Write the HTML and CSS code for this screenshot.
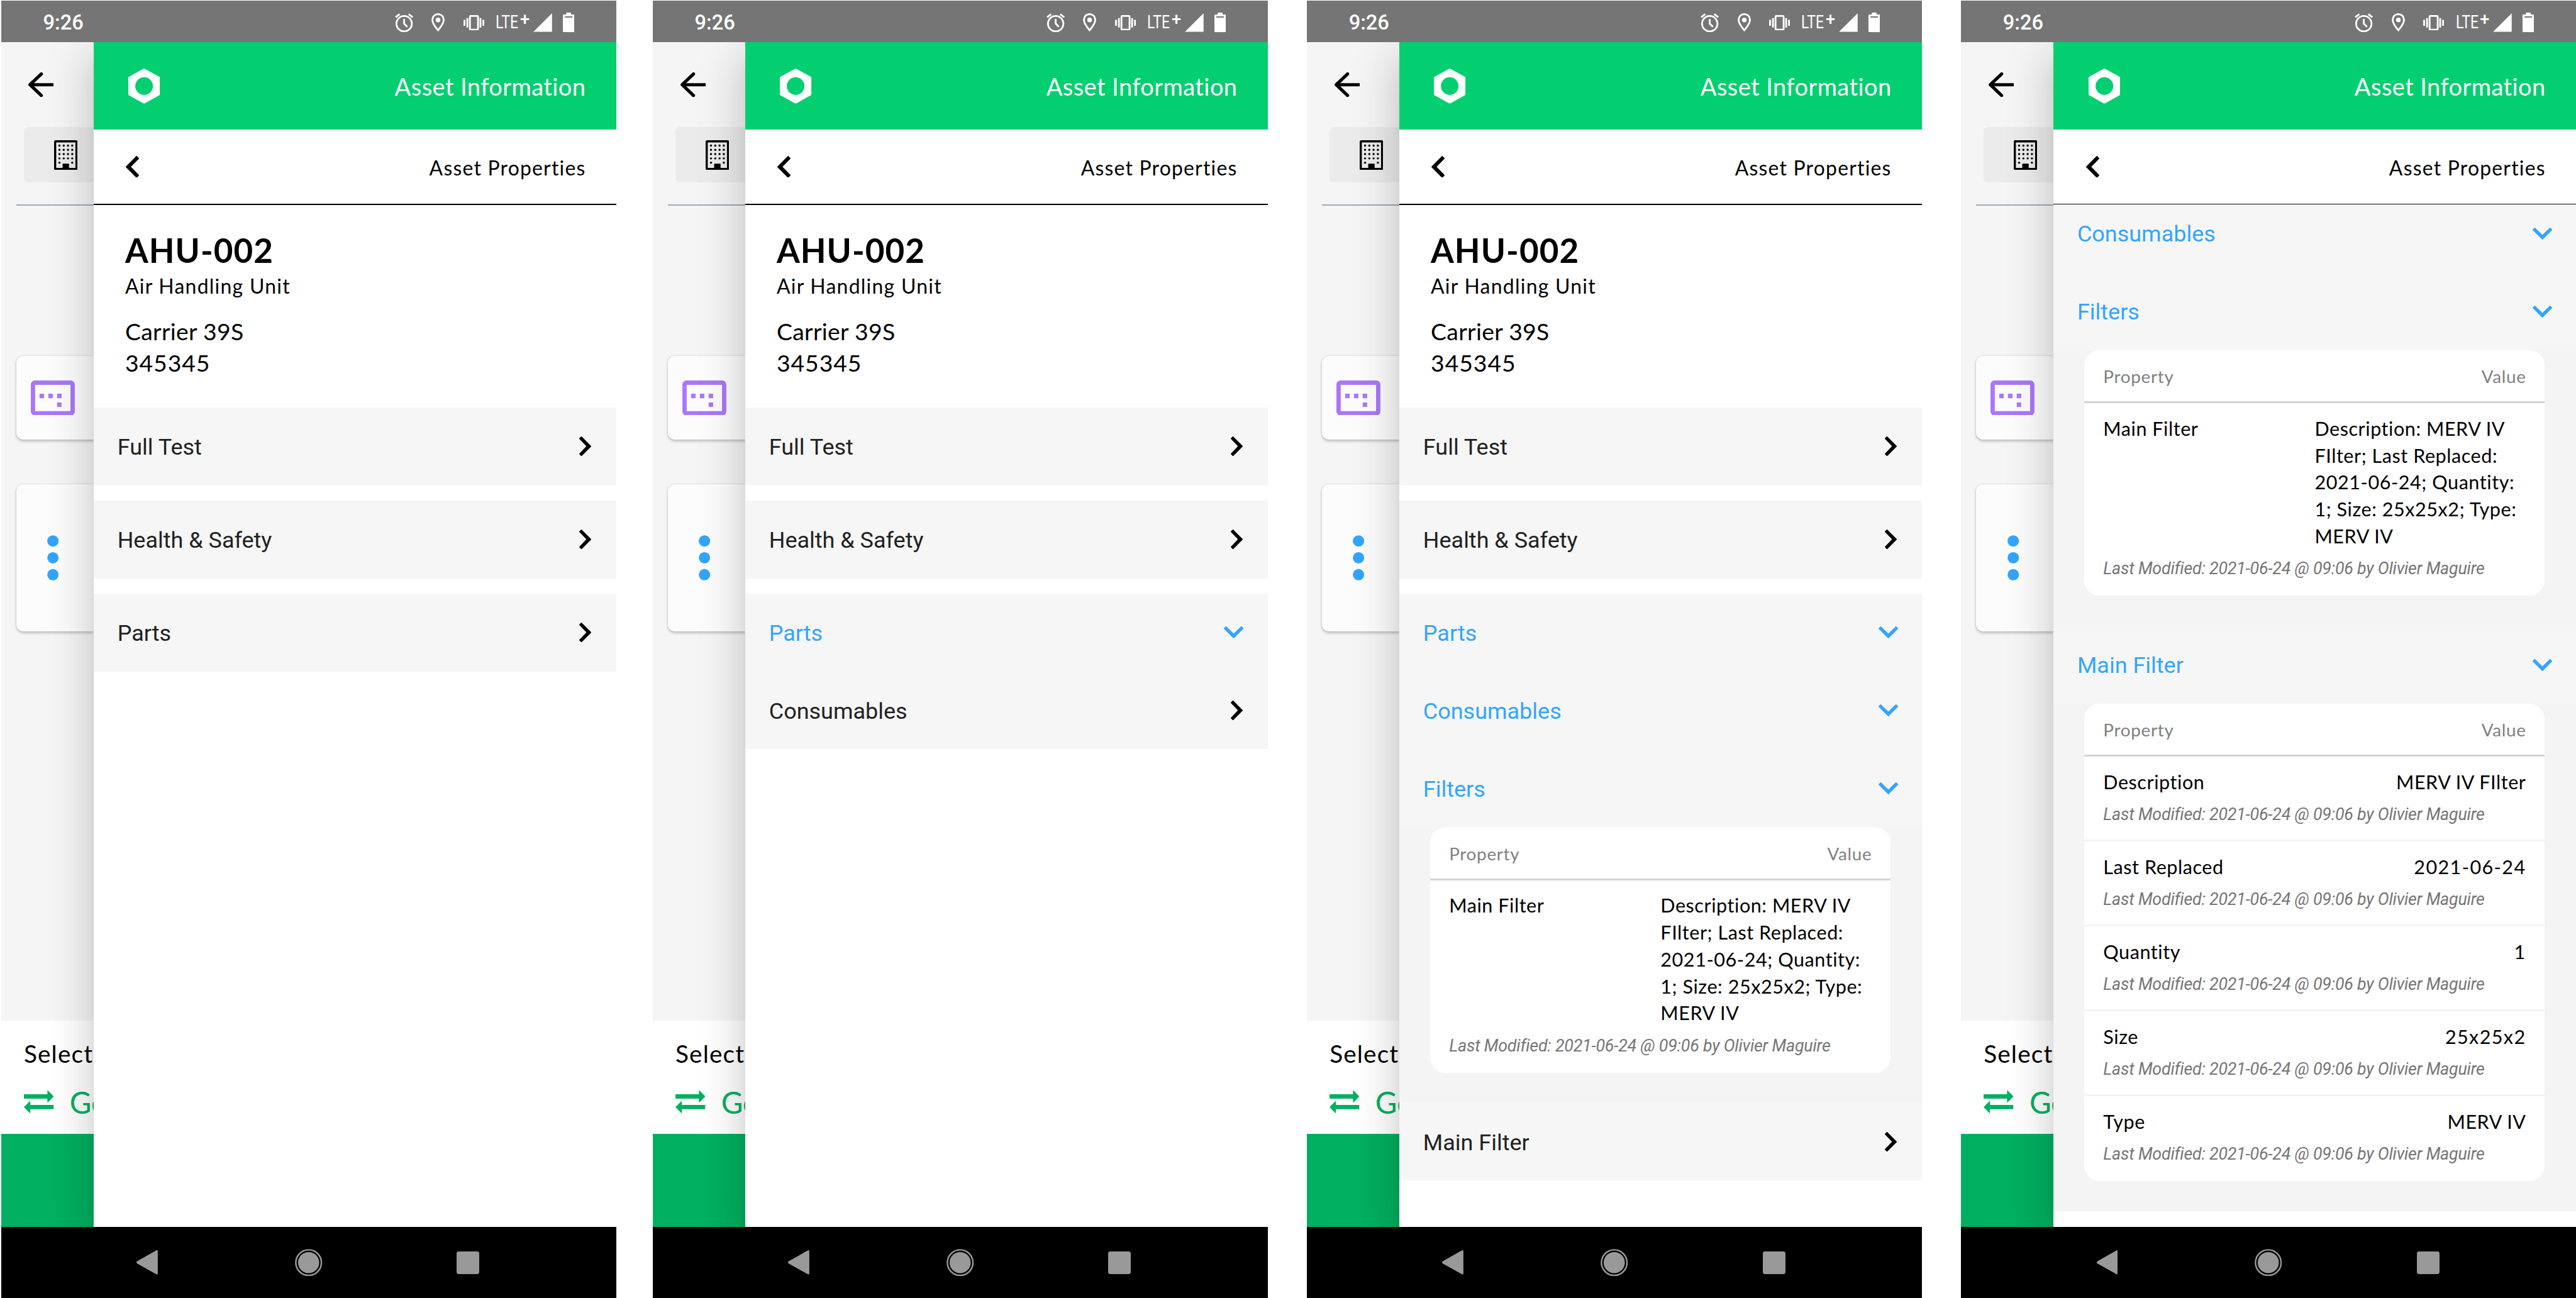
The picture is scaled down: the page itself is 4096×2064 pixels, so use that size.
FILE: index.html
```
<!DOCTYPE html>
<html lang="en">
<head>
  <meta charset="UTF-8">
  <meta name="viewport" content="width=device-width, initial-scale=1.0">
  <title>Asset Information</title>
  <link rel="stylesheet" href="styles.css">
</head>
<body>

<!-- icon sprite -->
<svg class="sprite" xmlns="http://www.w3.org/2000/svg">
  <symbol id="i-alarm" viewBox="0 0 43 45">
    <circle cx="21.5" cy="24.5" r="18" fill="none" stroke="currentColor" stroke-width="4.2"/>
    <path d="M21.5 13.500v11l7.500 7.500M1.500 9.500 11 2M41.500 9.500 32 2" fill="none" stroke="currentColor" stroke-width="4.200"/>
  </symbol>
  <symbol id="i-pin" viewBox="0 0 31 44">
    <path d="M15.500 2.200C8 2.200 2.200 8 2.200 15.500c0 9 13.300 24.500 13.300 24.500s13.300-15.500 13.300-24.500C28.800 8 23 2.200 15.500 2.200z" fill="none" stroke="currentColor" stroke-width="4.200"/>
    <circle cx="15.500" cy="15.800" r="5.500" fill="currentColor"/>
  </symbol>
  <symbol id="i-vibrate" viewBox="0 0 49 36">
    <rect x="15" y="2" width="19" height="32" rx="2" fill="none" stroke="currentColor" stroke-width="4.200"/>
    <path d="M2.200 11v14M9 7v22M39.800 7v22M46.600 11v14" stroke="currentColor" stroke-width="4.200"/>
  </symbol>
  <symbol id="i-signal" viewBox="0 0 44 44">
    <path d="M44 0v44H0z" fill="currentColor"/>
  </symbol>
  <symbol id="i-battery" viewBox="0 0 27 46">
    <path fill-rule="evenodd" d="M8 0h11v4.500h5.500A2.500 2.500 0 0 1 27 7v36.500a2.500 2.500 0 0 1-2.500 2.500h-22A2.500 2.500 0 0 1 0 43.500V7a2.500 2.500 0 0 1 2.500-2.500H8zM4.500 9v2.700h18V9z" fill="currentColor"/>
  </symbol>
  <symbol id="i-back" viewBox="0 0 59 58">
    <path d="M30.500 3.800 4 29l26.500 25.200" fill="none" stroke="currentColor" stroke-width="7.500" stroke-linecap="round" stroke-linejoin="round"/>
    <path d="M8 29h51" stroke="currentColor" stroke-width="7.500"/>
  </symbol>
  <symbol id="i-building" viewBox="0 0 55 70">
    <rect x="2.500" y="2.500" width="50" height="65" rx="1" fill="none" stroke="currentColor" stroke-width="5"/>
    <path d="M12.500 12.500h30.100M12.500 22.500h30.100M12.500 32.500h30.100M12.500 42.500h30.100M12.500 52.500h.1M42.500 52.500h.1" fill="none" stroke="currentColor" stroke-width="5" stroke-linecap="round" stroke-dasharray=".1 9.900"/>
    <path d="M20 70V56.500a1.500 1.500 0 0 1 1.500-1.500h12a1.500 1.500 0 0 1 1.500 1.500V70z" fill="currentColor"/>
  </symbol>
  <symbol id="i-panel" viewBox="0 0 103 82">
    <rect x="5" y="5" width="93" height="72" rx="5" fill="none" stroke="currentColor" stroke-width="10.300"/>
    <path d="M20.500 31h10.500v10.500H20.500zM41 31h10.500v10.500H41zM61.500 31H72v10.500H61.500zM61.500 51.500H72V62H61.500z" fill="currentColor"/>
  </symbol>
  <symbol id="i-dots" viewBox="0 0 27 106">
    <circle cx="13.500" cy="13.500" r="13.300" fill="currentColor"/>
    <circle cx="13.500" cy="53" r="13.300" fill="currentColor"/>
    <circle cx="13.500" cy="92.500" r="13.300" fill="currentColor"/>
  </symbol>
  <symbol id="i-swap" viewBox="0 0 70 53">
    <path d="M1 9h54V1q0-1.500 1.500-.5L70 14 56.500 27.500Q55 28.500 55 27v-8H1q-1 0-1-1v-8q0-1 1-1zM69 44H15v8q0 1.500-1.500.5L0 39l13.500-13.500Q15 24.500 15 26v8h54q1 0 1 1v8q0 1-1 1z" fill="currentColor"/>
  </symbol>
  <symbol id="i-hex" viewBox="0 0 74 82">
    <path fill-rule="evenodd" d="M35 .7q2-1.200 4 0l33.500 18.600Q74 20.200 74 22v38q0 1.800-1.500 2.700L39 81.300q-2 1.200-4 0L1.500 62.700Q0 61.800 0 60V22q0-1.800 1.500-2.700zM37 20.300a20.700 20.700 0 1 0 0 41.400 20.700 20.700 0 0 0 0-41.400z" fill="currentColor"/>
  </symbol>
  <symbol id="i-left" viewBox="0 0 31 51">
    <path d="M25.800 0 31 5.200v1L12.200 25.500 31 44.800v1L25.800 51h-1L0 26v-1L24.800 0z" fill="currentColor"/>
  </symbol>
  <symbol id="i-right" viewBox="0 0 28 46">
    <path d="M4.600 0 0 4.600v1L16.800 23 0 40.400v1L4.600 46h1L28 23.500v-1L5.600 0z" fill="currentColor"/>
  </symbol>
  <symbol id="i-down" viewBox="0 0 46 28">
    <path d="M0 4.600 4.600 0h1L23 16.800 40.400 0h1L46 4.600v1L23.500 28h-1L0 5.600z" fill="currentColor"/>
  </symbol>
  <symbol id="i-nav-back" viewBox="0 0 50 57">
    <path d="M1 26 46.500.5Q50-1 50 2.500v52q0 3.500-3.500 2L1 31q-2-2.500 0-5z" fill="currentColor"/>
  </symbol>
  <symbol id="i-nav-home" viewBox="0 0 64 64">
    <circle cx="32" cy="32" r="30" fill="none" stroke="currentColor" stroke-width="3.600"/>
    <circle cx="32" cy="32" r="24.800" fill="currentColor"/>
  </symbol>
</svg>

<!-- parts shared by every phone -->
<template id="statusTemplate">
  <div class="status-bar">
    <span class="clock">9:26</span>
    <svg class="i-alarm"><use href="#i-alarm"/></svg>
    <svg class="i-pin"><use href="#i-pin"/></svg>
    <svg class="i-vibrate"><use href="#i-vibrate"/></svg>
    <span class="network"><span class="lte">LTE</span><span class="plus">+</span></span>
    <svg class="i-signal"><use href="#i-signal"/></svg>
    <svg class="i-battery"><use href="#i-battery"/></svg>
  </div>
</template>

<template id="pageTemplate">
  <div class="page">
    <svg class="i-back"><use href="#i-back"/></svg>
    <div class="building-chip"><svg class="i-building"><use href="#i-building"/></svg></div>
    <div class="page-rule"></div>
    <div class="tile tile-panel"><svg class="i-panel"><use href="#i-panel"/></svg></div>
    <div class="tile tile-more"><svg class="i-dots"><use href="#i-dots"/></svg></div>
    <div class="page-select">
      <div class="select-label">Select</div>
      <div class="select-go"><svg class="i-swap"><use href="#i-swap"/></svg><span>Go</span></div>
    </div>
    <div class="page-footer"></div>
  </div>
</template>

<template id="headerTemplate">
  <div class="drawer-header">
    <svg class="i-hex"><use href="#i-hex"/></svg>
    <span>Asset Information</span>
  </div>
  <div class="drawer-sub">
    <svg class="i-left"><use href="#i-left"/></svg>
    <span>Asset Properties</span>
  </div>
</template>

<template id="navTemplate">
  <div class="nav-bar">
    <svg class="i-nav-back"><use href="#i-nav-back"/></svg>
    <svg class="i-nav-home"><use href="#i-nav-home"/></svg>
    <div class="nav-recent"></div>
  </div>
</template>

<div class="phones">

  <div class="phone">
    <div class="drawer-body">
      <div class="asset">
        <h1>AHU-002</h1>
        <div class="asset-type">Air Handling Unit</div>
        <div class="asset-model">Carrier 39S</div>
        <div class="asset-model asset-serial">345345</div>
      </div>
      <div class="group"><div class="row">Full Test</div></div>
      <div class="group"><div class="row">Health &amp; Safety</div></div>
      <div class="group"><div class="row">Parts</div></div>
    </div>
  </div>

  <div class="phone">
    <div class="drawer-body">
      <div class="asset">
        <h1>AHU-002</h1>
        <div class="asset-type">Air Handling Unit</div>
        <div class="asset-model">Carrier 39S</div>
        <div class="asset-model asset-serial">345345</div>
      </div>
      <div class="group"><div class="row">Full Test</div></div>
      <div class="group"><div class="row">Health &amp; Safety</div></div>
      <div class="group">
        <div class="row open">Parts</div>
        <div class="row">Consumables</div>
      </div>
    </div>
  </div>

  <div class="phone">
    <div class="drawer-body">
      <div class="asset">
        <h1>AHU-002</h1>
        <div class="asset-type">Air Handling Unit</div>
        <div class="asset-model">Carrier 39S</div>
        <div class="asset-model asset-serial">345345</div>
      </div>
      <div class="group"><div class="row">Full Test</div></div>
      <div class="group"><div class="row">Health &amp; Safety</div></div>
      <div class="group">
        <div class="row open">Parts</div>
        <div class="row open">Consumables</div>
        <div class="row open">Filters</div>
        <div class="details">
          <div class="card">
            <div class="card-head"><span>Property</span><span>Value</span></div>
            <div class="prop">
              <div class="prop-line">
                <span>Main Filter</span>
                <span class="long">Description: MERV IV<br>FIlter; Last Replaced:<br>2021-06-24; Quantity:<br>1; Size: 25x25x2; Type:<br>MERV IV</span>
              </div>
              <div class="modified">Last Modified: 2021-06-24 @ 09:06 by Olivier Maguire</div>
            </div>
          </div>
        </div>
        <div class="row">Main Filter</div>
      </div>
    </div>
  </div>

  <div class="phone">
    <div class="drawer-body scrolled">
      <div class="group">
        <div class="row open">Consumables</div>
        <div class="row open">Filters</div>
        <div class="details">
          <div class="card">
            <div class="card-head"><span>Property</span><span>Value</span></div>
            <div class="prop">
              <div class="prop-line">
                <span>Main Filter</span>
                <span class="long">Description: MERV IV<br>FIlter; Last Replaced:<br>2021-06-24; Quantity:<br>1; Size: 25x25x2; Type:<br>MERV IV</span>
              </div>
              <div class="modified">Last Modified: 2021-06-24 @ 09:06 by Olivier Maguire</div>
            </div>
          </div>
        </div>
        <div class="row open">Main Filter</div>
        <div class="details">
          <div class="card">
            <div class="card-head"><span>Property</span><span>Value</span></div>
            <div class="prop">
              <div class="prop-line"><span>Description</span><span>MERV IV FIlter</span></div>
              <div class="modified">Last Modified: 2021-06-24 @ 09:06 by Olivier Maguire</div>
            </div>
            <div class="prop">
              <div class="prop-line"><span>Last Replaced</span><span class="num">2021-06-24</span></div>
              <div class="modified">Last Modified: 2021-06-24 @ 09:06 by Olivier Maguire</div>
            </div>
            <div class="prop">
              <div class="prop-line"><span>Quantity</span><span class="num">1</span></div>
              <div class="modified">Last Modified: 2021-06-24 @ 09:06 by Olivier Maguire</div>
            </div>
            <div class="prop">
              <div class="prop-line"><span>Size</span><span class="num">25x25x2</span></div>
              <div class="modified">Last Modified: 2021-06-24 @ 09:06 by Olivier Maguire</div>
            </div>
            <div class="prop">
              <div class="prop-line"><span>Type</span><span>MERV IV</span></div>
              <div class="modified">Last Modified: 2021-06-24 @ 09:06 by Olivier Maguire</div>
            </div>
          </div>
        </div>
      </div>
    </div>
  </div>

</div>

<script>
function part(id) {
  return document.getElementById(id).content.cloneNode(true);
}

// wrap each drawer body in the phone shell
document.querySelectorAll('.phone').forEach(phone => {
  const body = phone.querySelector('.drawer-body');
  const drawer = document.createElement('div');
  const screen = document.createElement('div');
  drawer.className = 'drawer';
  screen.className = 'screen';
  drawer.append(part('headerTemplate'), body);
  screen.append(part('pageTemplate'), drawer);
  phone.append(part('statusTemplate'), screen, part('navTemplate'));
});

// chevron at the end of each row
document.querySelectorAll('.row').forEach(row => {
  const icon = row.classList.contains('open') ? 'i-down' : 'i-right';
  row.insertAdjacentHTML('beforeend', `<svg class="${icon}"><use href="#${icon}"/></svg>`);
});
</script>

</body>
</html>
```
FILE: styles.css
```
/* 1rem = 10 device pixels of the phone screen */
html {
  font-size: 6.7893px;
}
body {
  margin: 0;
  background: #fff;
  overflow: hidden;
  font-family: Lato, "Liberation Sans", sans-serif;
  color: #000;
}
.sprite {
  display: none;
}
svg {
  display: block;
  flex: none;
}
.phones {
  display: flex;
  height: 2064px;
  overflow: hidden;
  padding: 0.1rem 0 0 0.3rem;
  box-sizing: border-box;
}
.phone {
  flex: none;
  width: 144rem;
  height: 304rem;
  display: flex;
  flex-direction: column;
  margin-right: 9.2rem;
}
.phone:first-child {
  margin-right: 8.6rem;
}
.phone:last-child {
  margin-right: 0;
}

/* status bar */
.status-bar {
  height: 9.8rem;
  flex: none;
  display: flex;
  align-items: center;
  background: #757575;
  color: #fff;
  padding: 0.6rem 9.8rem 0 9.8rem;
  box-sizing: border-box;
  position: relative;
  z-index: 2;
}
.clock {
  font-family: Roboto, sans-serif;
  font-size: 4.8rem;
  font-weight: 500;
  margin-right: auto;
}
.i-alarm { width: 4.3rem; height: 4.5rem; margin-right: 4.3rem; }
.i-pin { width: 3.1rem; height: 4.4rem; margin-right: 4.3rem; }
.i-vibrate { width: 4.9rem; height: 3.6rem; margin-right: 2.7rem; }
.i-signal { width: 4.4rem; height: 4.4rem; margin-right: 2.5rem; }
.i-battery { width: 2.7rem; height: 4.6rem; }
.network {
  width: 8.8rem;
  display: flex;
  font-family: Roboto, sans-serif;
  font-size: 4.3rem;
  line-height: 4.6rem;
}
.lte {
  width: 5.6rem;
  transform: scaleX(0.79);
  transform-origin: left;
}
.plus {
  font-size: 4rem;
  font-weight: 500;
  line-height: 3.4rem;
  margin-left: 0.1rem;
}

/* page under the drawer */
.screen {
  height: 277.4rem;
  flex: none;
  display: flex;
  overflow: hidden;
}
.page {
  width: 21.6rem;
  flex: none;
  display: flex;
  flex-direction: column;
  background: #f5f5f5;
  overflow: hidden;
  white-space: nowrap;
}
.i-back {
  width: 5.9rem;
  height: 5.8rem;
  margin: 7.1rem 0 7rem 6.4rem;
}
.building-chip {
  height: 12.9rem;
  flex: none;
  margin-left: 5.3rem;
  padding: 3rem 0 0 7rem;
  box-sizing: border-box;
  background: #ebebeb;
  border-radius: 1rem 0 0 1rem;
}
.i-building { width: 5.5rem; height: 7rem; }
.page-rule {
  height: 0.3rem;
  flex: none;
  margin: 5.2rem 0 35.2rem 3.5rem;
  background: #9babb6;
}
.tile {
  flex: none;
  display: flex;
  align-items: center;
  margin-left: 3.5rem;
  background: #fcfcfc;
  border-radius: 1.6rem 0 0 1.6rem;
  box-shadow: 0 0.4rem 0.7rem rgba(0, 0, 0, 0.2), 0 0 0.3rem rgba(0, 0, 0, 0.18);
}
.tile-panel {
  height: 19.5rem;
  margin-bottom: 10.5rem;
  padding-left: 3.4rem;
  color: #ab77f9;
}
.tile-more {
  height: 34.5rem;
  padding-left: 7.3rem;
  color: #33a5ff;
}
.i-panel { width: 10.3rem; height: 8.2rem; }
.i-dots { width: 2.7rem; height: 10.6rem; }
.page-select {
  height: 26.4rem;
  flex: none;
  margin-top: auto;
  padding: 4rem 0 0 5.3rem;
  box-sizing: border-box;
  background: #fff;
}
.select-label {
  font-size: 5.7rem;
  line-height: 7.4rem;
  letter-spacing: 0.03em;
}
.select-go {
  display: flex;
  align-items: center;
  margin-top: 3.4rem;
  font-size: 7rem;
  line-height: 8.4rem;
  color: #00b060;
}
.i-swap { width: 7rem; height: 5.3rem; margin-right: 3.7rem; }
.page-footer {
  height: 21.8rem;
  flex: none;
  background: #00b060;
}

/* drawer */
.drawer {
  flex: 1;
  display: flex;
  flex-direction: column;
  background: #fff;
  position: relative;
  box-shadow: 0 2.8rem 3.5rem -1.8rem rgba(0, 0, 0, 0.1), 0 5.6rem 8.4rem 0.7rem rgba(0, 0, 0, 0.1), 0 2.1rem 10.5rem 1.7rem rgba(0, 0, 0, 0.09);
}
.drawer-header,
.drawer-sub {
  flex: none;
  display: flex;
  align-items: center;
  justify-content: space-between;
  padding-right: 7.1rem;
}
.drawer-header {
  height: 20.5rem;
  padding-left: 8.2rem;
  background: #03cf70;
  color: #fff;
  font-size: 5.6rem;
  letter-spacing: 0.011em;
}
.drawer-header span {
  padding-top: 0.2rem;
}
.drawer-sub {
  height: 17.3rem;
  padding-left: 7.6rem;
  border-bottom: 0.3rem solid #000;
  margin-bottom: -0.1rem;
  font-size: 4.7rem;
  letter-spacing: 0.038em;
}
.drawer-sub span {
  padding-top: 0.5rem;
}
.i-hex { width: 7.4rem; height: 8.2rem; }
.i-left { width: 3.1rem; height: 5.1rem; }
.drawer-body {
  flex: 1;
  min-height: 0;
  overflow: hidden;
}
.scrolled .group:first-child {
  margin-top: -2.4rem;
}
.asset {
  height: 47.5rem;
  padding: 6.2rem 0 0 7.4rem;
  box-sizing: border-box;
}
h1 {
  margin: 0;
  font-size: 7.8rem;
  line-height: 9rem;
  font-weight: 700;
  letter-spacing: 0.02em;
}
.asset-type {
  margin: 0.9rem 0 3.5rem;
  font-size: 4.7rem;
  line-height: 6.4rem;
  letter-spacing: 0.04em;
}
.asset-model {
  font-size: 5.5rem;
  line-height: 7.4rem;
  letter-spacing: 0.008em;
}
.asset-serial {
  letter-spacing: 0.025em;
}

/* accordion */
.group {
  background: #f6f6f6;
  margin-bottom: 3.55rem;
}
.row {
  height: 18.25rem;
  padding: 0.4rem 5.6rem 0 5.6rem;
  box-sizing: border-box;
  display: flex;
  align-items: center;
  justify-content: space-between;
  font-family: Roboto, sans-serif;
  font-size: 5.3rem;
  color: #212121;
}
.row.open {
  color: #33a5ff;
}
.i-right { width: 2.8rem; height: 4.6rem; margin: 0 0.2rem 0.3rem 0; color: #000; }
.i-down { width: 4.6rem; height: 2.8rem; margin-bottom: 0.3rem; }
.details {
  background: #f4f4f4;
  padding: 0 7.3rem 7rem;
}
.card {
  background: #fff;
  border-radius: 3.6rem;
  overflow: hidden;
}
.card-head {
  height: 11.7rem;
  display: flex;
  align-items: center;
  justify-content: space-between;
  padding: 0.3rem 4.4rem 0;
  border-bottom: 0.45rem solid #d3d3d3;
  font-size: 4.1rem;
  letter-spacing: 0.025em;
  color: #808080;
}
.prop {
  padding: 2.9rem 4.4rem 3.55rem;
  border-bottom: 0.45rem solid #f4f4f4;
}
.prop:last-child {
  border-bottom-color: #fff;
}
.prop-line {
  display: flex;
  justify-content: space-between;
  font-size: 4.5rem;
  line-height: 6.3rem;
  letter-spacing: 0.018em;
}
.prop-line .num {
  letter-spacing: 0.045em;
}
.long {
  width: 50%;
  white-space: nowrap;
}
.modified {
  margin-top: 2.1rem;
  font-family: Roboto, sans-serif;
  font-style: italic;
  font-size: 3.95rem;
  line-height: 4.6rem;
  letter-spacing: -0.008em;
  color: #757575;
  white-space: nowrap;
}

/* android navigation bar */
.nav-bar {
  height: 16.8rem;
  flex: none;
  display: flex;
  align-items: center;
  background: #000;
  color: #999;
  padding-left: 31.7rem;
  position: relative;
  z-index: 2;
}
.i-nav-back { width: 5rem; height: 5.7rem; margin-right: 32.1rem; }
.i-nav-home { width: 6.4rem; height: 6.4rem; margin-right: 31.5rem; }
.nav-recent {
  width: 5.3rem;
  height: 5.3rem;
  border-radius: 0.5rem;
  background: #999;
}
```
